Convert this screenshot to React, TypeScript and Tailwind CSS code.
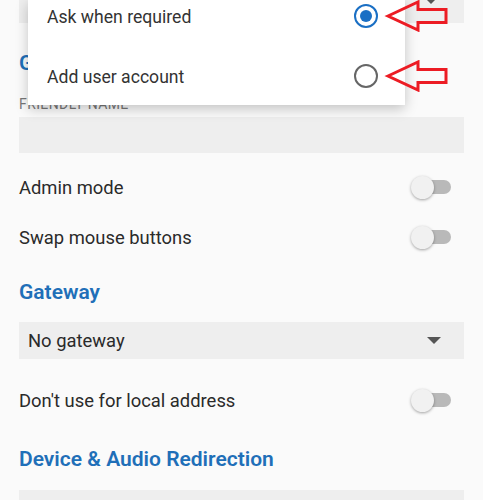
import React from "react";

const font = { fontFamily: "Roboto, 'Liberation Sans', sans-serif" };

const Toggle = () => (
  <div className="relative w-[40px] h-[24px] flex items-center">
    <div className="absolute left-[8px] right-0 h-[14px] rounded-full bg-[#b9b9b9]" />
    <div className="absolute left-0 w-[23px] h-[23px] rounded-full bg-[#f1f1f1] shadow-[0_1px_3px_rgba(0,0,0,0.35)]" />
  </div>
);

const ToggleRow = ({ label, className }: { label: string; className: string }) => (
  <div className={`flex items-center justify-between h-[40px] pr-[13px] ${className}`}>
    <span className="text-[18.4px] text-[#2a2a2a] pt-[1px]">{label}</span>
    <Toggle />
  </div>
);

const Heading = ({ text, className }: { text: string; className: string }) => (
  <div className={`h-[24px] flex items-center pt-[1px] text-[21px] font-semibold text-[#1f6fb8] ${className}`}>
    {text}
  </div>
);

const Caret = () => (
  <svg width="14" height="8" viewBox="0 0 14 8">
    <path d="M0 0 L14 0 L7 7 Z" fill="#555" />
  </svg>
);

const RedArrow = ({ top }: { top: number }) => (
  <svg className="absolute left-[384px]" style={{ top }} width="66" height="32" viewBox="0 0 66 32">
    <path
      d="M4 16 L34 2 L34 9.5 L62 9.5 L62 22.5 L34 22.5 L34 30 Z"
      fill="none"
      stroke="#ec1c24"
      strokeWidth="3"
      strokeLinejoin="miter"
    />
  </svg>
);

const options = [
  { label: "Ask when required", checked: true },
  { label: "Add user account", checked: false },
];

export default function App() {
  return (
    <div className="relative w-[483px] h-[500px] overflow-hidden bg-[#fafafa]" style={font}>
      <div className="px-[19px] w-full flex flex-col">
        <div className="h-[23px] bg-[#eeeeee] relative">
          <div className="absolute right-[26px] -top-[3px]">
            <Caret />
          </div>
        </div>
        <Heading text="General" className="mt-[28px]" />
        <div className="mt-[21px] h-[17px] flex items-center text-[14px] tracking-[0.4px] uppercase text-[#777]">
          Friendly name
        </div>
        <div className="mt-[4px] h-[36px] bg-[#eeeeee]" />
        <ToggleRow label="Admin mode" className="mt-[14px]" />
        <ToggleRow label="Swap mouse buttons" className="mt-[10px]" />
        <Heading text="Gateway" className="mt-[23px]" />
        <div className="mt-[18px] h-[37px] bg-[#eeeeee] flex items-center justify-between pl-[9px] pr-[23px]">
          <span className="text-[18.4px] text-[#2a2a2a] pt-[1px]">No gateway</span>
          <Caret />
        </div>
        <ToggleRow label="Don't use for local address" className="mt-[21px]" />
        <Heading text="Device & Audio Redirection" className="mt-[27px]" />
        <div className="mt-[19px] h-[40px] bg-[#eeeeee]" />
      </div>

      <div className="absolute left-[28px] top-0 w-[377px] h-[105px] bg-white shadow-[0_4px_12px_rgba(0,0,0,0.22)] flex flex-col">
        {options.map((o, i) => (
          <div key={i} className={`flex items-center justify-between pl-[19px] pr-[27px] h-[30px] ${i === 0 ? "mt-[1px]" : "mt-[30px]"}`}>
            <span className="text-[17.6px] text-[#333] pt-[2px]">{o.label}</span>
            {o.checked ? (
              <div className="w-[24px] h-[24px] rounded-full border-[2.5px] border-[#1a6fc4] flex items-center justify-center">
                <div className="w-[12px] h-[12px] rounded-full bg-[#1a6fc4]" />
              </div>
            ) : (
              <div className="w-[24px] h-[24px] rounded-full border-[2px] border-[#666]" />
            )}
          </div>
        ))}
      </div>

      <RedArrow top={0} />
      <RedArrow top={60} />
    </div>
  );
}
